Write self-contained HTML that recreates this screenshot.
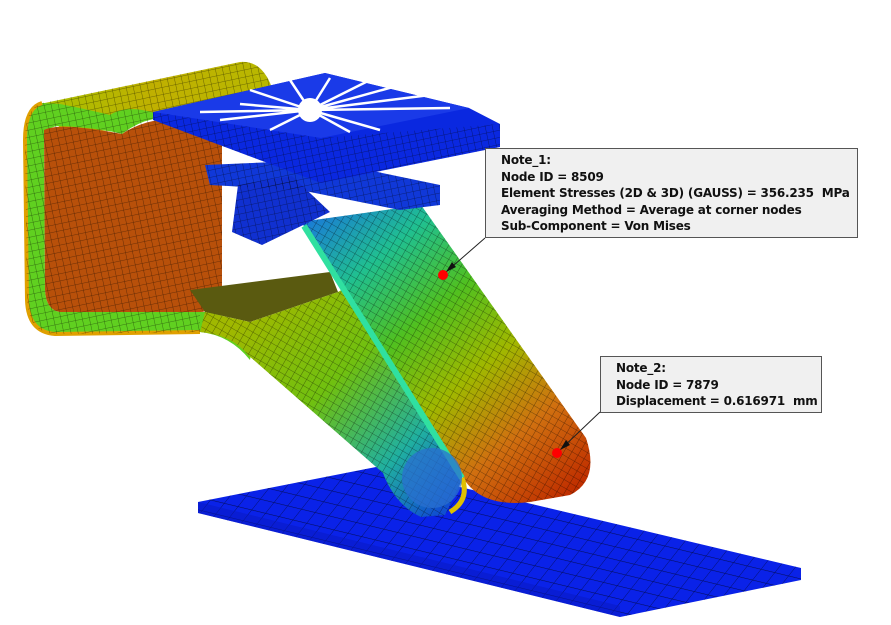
<!DOCTYPE html>
<html><head><meta charset="utf-8"><style>
html,body{margin:0;padding:0;background:#fff;}
body{width:891px;height:625px;overflow:hidden;position:relative;font-family:"DejaVu Sans","Liberation Sans",sans-serif;}
.note{position:absolute;background:#f0f0f0;border:1px solid #555;font-weight:bold;font-size:12px;line-height:16.5px;color:#111;padding:3px 0 0 15px;box-sizing:border-box;letter-spacing:-0.2px;}
</style></head><body>
<svg width="891" height="625" viewBox="0 0 891 625" style="position:absolute;left:0;top:0">
<defs>
<pattern id="g" width="7" height="7" patternUnits="userSpaceOnUse" patternTransform="rotate(-12)">
<path d="M0 0H7M0 0V7" stroke="#000" stroke-width="0.8" stroke-opacity="0.55" fill="none"/></pattern>
<pattern id="gp" width="16" height="11" patternUnits="userSpaceOnUse" patternTransform="skewX(-30) rotate(12)">
<path d="M0 0H16M0 0V11" stroke="#000" stroke-width="1" stroke-opacity="0.6" fill="none"/></pattern>
<pattern id="g2" width="7" height="7" patternUnits="userSpaceOnUse" patternTransform="rotate(30)">
<path d="M0 0H7M0 0V7" stroke="#000" stroke-width="0.8" stroke-opacity="0.55" fill="none"/></pattern>
<linearGradient id="arm" x1="330" y1="200" x2="570" y2="490" gradientUnits="userSpaceOnUse">
<stop offset="0" stop-color="#1a7ad8"/><stop offset="0.2" stop-color="#20c090"/><stop offset="0.4" stop-color="#50c020"/><stop offset="0.6" stop-color="#a0b800"/><stop offset="0.8" stop-color="#d07010"/><stop offset="1" stop-color="#c03000"/></linearGradient>
<linearGradient id="low" x1="250" y1="310" x2="440" y2="510" gradientUnits="userSpaceOnUse">
<stop offset="0" stop-color="#a0b800"/><stop offset="0.4" stop-color="#70c010"/><stop offset="0.75" stop-color="#20b0a0"/><stop offset="1" stop-color="#1050d0"/></linearGradient>
<linearGradient id="top" x1="40" y1="100" x2="270" y2="80" gradientUnits="userSpaceOnUse">
<stop offset="0" stop-color="#a8c000"/><stop offset="0.5" stop-color="#c0b000"/><stop offset="1" stop-color="#b8b800"/></linearGradient>
<clipPath id="cc"><path d="M42,103 Q25,108 25,140 L27,300 Q28,332 55,334 L200,332 L200,312 L222,300 L222,140 L272,88 Q262,60 240,62 Z"/></clipPath>
</defs>
<!-- base plate -->
<polygon points="198,502 376,467 801,568 801,580 620,617 198,513" fill="#0a22e8"/>
<polygon points="198,502 376,467 801,568 801,580 620,617 198,513" fill="url(#gp)"/>
<polygon points="198,513 620,617 620,606 198,502" fill="#0818c0" opacity="0.5"/>
<!-- top flange of C -->
<path d="M40,104 L240,62 Q262,60 272,88 L200,118 L150,118 Q130,122 120,132 Q100,130 60,128 Z" fill="url(#top)"/>
<!-- C outer band -->
<path d="M42,103 Q25,108 25,140 L27,300 Q28,332 55,334 L200,332 Q230,335 250,360 L253,340 Q235,315 205,312 L60,312 Q46,310 45,290 L44,140 Q46,125 62,126 Q100,128 122,134 Q140,120 160,118 L152,112 Q125,105 110,115 Q90,110 60,104 Z" fill="#60d020"/>
<path d="M42,103 Q25,108 25,140 L27,300 Q28,332 55,334 L200,332" stroke="#e0a000" stroke-width="4" fill="none"/>
<!-- orange interior -->
<path d="M44,130 Q60,122 122,134 Q140,122 160,120 L222,140 L222,300 Q210,312 200,312 L60,312 Q46,310 45,290 Z" fill="#b8500a"/>
<g clip-path="url(#cc)"><rect x="0" y="50" width="300" height="300" fill="url(#g)"/></g>
<!-- dark mesh flange -->
<path d="M190,290 L330,272 L338,292 L250,322 L205,312 Z" fill="#5a5a10"/>
<!-- lower flange -->
<path d="M200,332 Q232,335 248,355 L383,473 Q395,505 421,517 L445,515 L462,480 L345,288 L338,292 L250,322 L205,312 Z" fill="url(#low)"/>
<path d="M200,332 Q232,335 248,355 L383,473 Q395,505 421,517 L445,515 L462,480 L345,288 L338,292 L250,322 L205,312 Z" fill="url(#g2)"/>
<!-- arm -->
<path d="M300,222 L421,205 L586,438 Q600,480 570,495 L530,502 Q480,508 462,476 L306,228 Z" fill="url(#arm)"/>
<path d="M300,222 L421,205 L586,438 Q600,480 570,495 L530,502 Q480,508 462,476 L306,228 Z" fill="url(#g2)"/>
<path d="M304,226 L462,478" stroke="#30e0a0" stroke-width="6" fill="none"/>
<path d="M462,478 Q470,500 450,512" stroke="#e0c000" stroke-width="5" fill="none"/>
<circle cx="432" cy="478" r="30" fill="#2a70d0" opacity="0.75"/>
<!-- blocks under plate -->
<polygon points="205,165 320,160 440,185 440,205 400,210 300,190 210,185" fill="#1038d8"/>
<polygon points="238,185 292,176 330,212 262,245 232,232" fill="#1030d0"/>
<polygon points="205,165 320,160 440,185 440,205 400,210 300,190 210,185" fill="url(#g)"/>
<polygon points="238,185 292,176 330,212 262,245 232,232" fill="url(#g)"/>
<!-- top plate -->
<polygon points="153,112 325,73 469,108 500,124 500,147 321,183 153,120" fill="#0a28e0"/>
<polygon points="153,112 325,73 469,108 321,138" fill="#1a3ae8"/>
<g stroke="#ffffff" stroke-width="2.5">
<path d="M310,110 L200,112 M310,110 L250,90 M310,110 L330,78 M310,110 L400,85 M310,110 L450,108 M310,110 L380,130 M310,110 L270,130 M310,110 L220,120 M310,110 L290,80 M310,110 L430,95 M310,110 L350,132 M310,110 L240,104 M310,110 L370,80"/></g>
<circle cx="310" cy="110" r="12" fill="#fff"/>
<polygon points="153,112 321,138 500,124 500,147 321,183 153,120" fill="url(#g)"/>
</svg>
<div class="note" style="left:485px;top:148px;width:373px;height:90px;">Note_1:<br>Node ID = 8509<br>Element Stresses (2D &amp; 3D) (GAUSS) = 356.235&nbsp; MPa<br>Averaging Method = Average at corner nodes<br>Sub-Component = Von Mises</div>
<div class="note" style="left:600px;top:356px;width:222px;height:57px;">Note_2:<br>Node ID = 7879<br>Displacement = 0.616971&nbsp; mm</div>
<svg width="891" height="625" viewBox="0 0 891 625" style="position:absolute;left:0;top:0">
<line x1="485" y1="238" x2="446" y2="272" stroke="#222" stroke-width="1"/>
<polygon points="446,272 452,262 456,267" fill="#111"/>
<circle cx="443" cy="275" r="5" fill="#f00"/>
<line x1="600" y1="412" x2="560" y2="450" stroke="#222" stroke-width="1"/>
<polygon points="560,450 566,440 570,445" fill="#111"/>
<circle cx="557" cy="453" r="5" fill="#f00"/>
</svg>
</body></html>
